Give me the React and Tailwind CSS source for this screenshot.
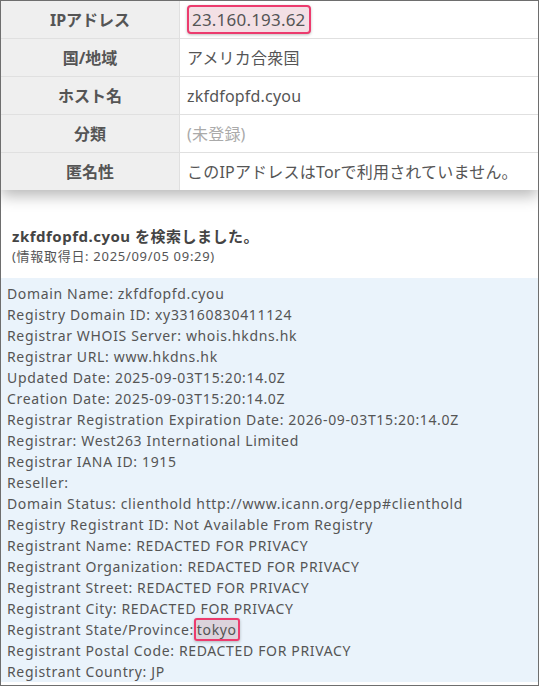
const rows = [
  { label: "IPアドレス", value: "23.160.193.62", mark: true },
  { label: "国/地域", value: "アメリカ合衆国" },
  { label: "ホスト名", value: "zkfdfopfd.cyou" },
  { label: "分類", value: "(未登録)", muted: true },
  { label: "匿名性", value: "このIPアドレスはTorで利用されていません。" },
];

const whois = [
  "Domain Name: zkfdfopfd.cyou",
  "Registry Domain ID: xy33160830411124",
  "Registrar WHOIS Server: whois.hkdns.hk",
  "Registrar URL: www.hkdns.hk",
  "Updated Date: 2025-09-03T15:20:14.0Z",
  "Creation Date: 2025-09-03T15:20:14.0Z",
  "Registrar Registration Expiration Date: 2026-09-03T15:20:14.0Z",
  "Registrar: West263 International Limited",
  "Registrar IANA ID: 1915",
  "Reseller:",
  "Domain Status: clienthold http://www.icann.org/epp#clienthold",
  "Registry Registrant ID: Not Available From Registry",
  "Registrant Name: REDACTED FOR PRIVACY",
  "Registrant Organization: REDACTED FOR PRIVACY",
  "Registrant Street: REDACTED FOR PRIVACY",
  "Registrant City: REDACTED FOR PRIVACY",
  "STATE",
  "Registrant Postal Code: REDACTED FOR PRIVACY",
  "Registrant Country: JP",
];

export default function App() {
  return (
    <div
      className="h-[686px] w-[539px] overflow-hidden border border-[#6e6e6e] bg-white text-[#555]"
      style={{ fontFamily: '"Noto Sans", "Noto Sans CJK JP", sans-serif' }}
    >
      <div className="shadow-[0_6px_14px_rgba(0,0,0,0.28)]">
        {rows.map((row, i) => (
          <div
            key={row.label}
            className={
              i < rows.length - 1
                ? "flex h-[38px] border-b border-[#e0e0e0]"
                : "flex h-[37px]"
            }
          >
            <div className="flex w-[179px] shrink-0 items-center justify-center border-r border-[#e0e0e0] bg-[#efefef] text-[16px] font-bold text-[#555]">
              {row.label}
            </div>
            <div className="flex min-w-0 flex-1 items-center whitespace-nowrap bg-white px-[7px] text-[16px] tracking-[0.2px]">
              {row.mark ? (
                <span className="rounded-[4px] border-2 border-[#ec3b6e] bg-[#f3e0e5] px-[3px] py-[2px] text-[17px] leading-[21px] shadow-[0_1px_3px_rgba(0,0,0,0.25)]">
                  {row.value}
                </span>
              ) : (
                <span className={row.muted ? "text-[#aaa]" : ""}>{row.value}</span>
              )}
            </div>
          </div>
        ))}
      </div>

      <div className="px-[11px] pb-[13px] pt-[35px]">
        <p className="text-[15px] font-bold leading-[22px] tracking-[0.5px] text-[#444]">
          zkfdfopfd.cyou を検索しました。
        </p>
        <p className="text-[13px] leading-[18px] tracking-[0.7px]">
          (情報取得日: 2025/09/05 09:29)
        </p>
      </div>

      <div className="bg-[#eaf3fb] px-[6px] pt-[5px] text-[14px] leading-[21px] tracking-[0.65px]">
        {whois.map((line) =>
          line === "STATE" ? (
            <div key={line}>
              Registrant State/Province:
              <span className="rounded-[3px] border-2 border-[#ec3b6e] bg-[#dcd3dc] px-[1px] shadow-[0_1px_3px_rgba(0,0,0,0.25)]">
                tokyo
              </span>
            </div>
          ) : (
            <div key={line}>{line}</div>
          )
        )}
      </div>
    </div>
  );
}
